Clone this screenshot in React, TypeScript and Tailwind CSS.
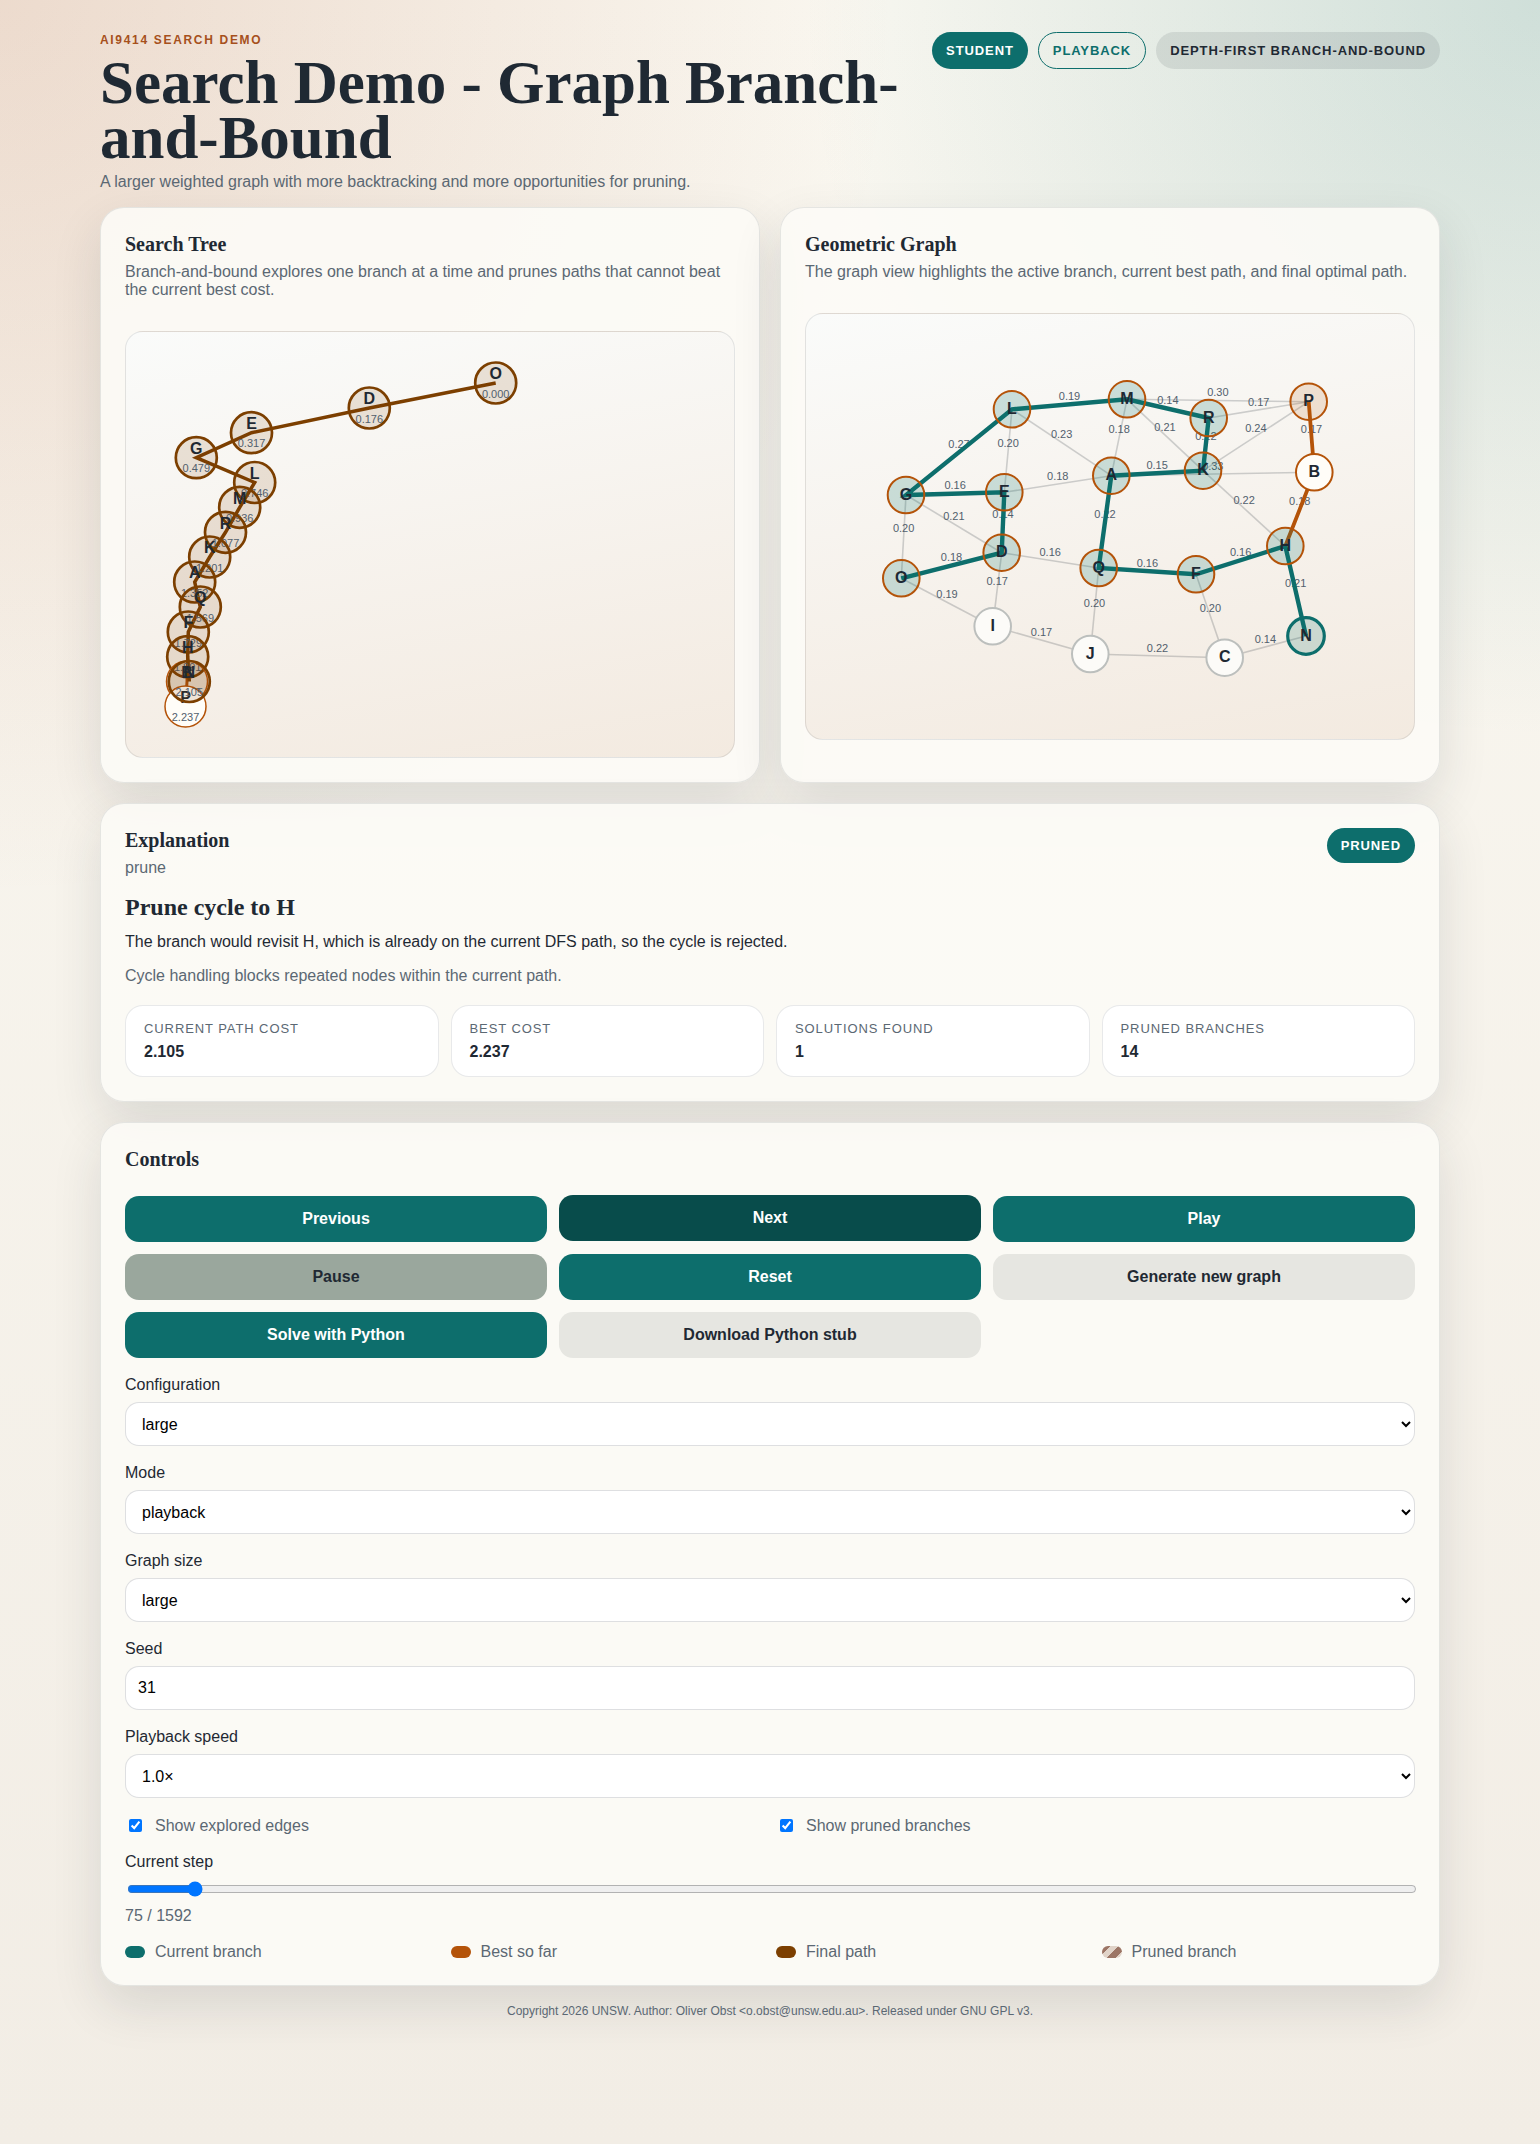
import React, { useState } from 'react';

type Point = [number, number];

interface TreeNode {
    label: string;
    cost: string;
    at: Point;
    best?: boolean;
    leaf?: boolean;
}

const TREE_NODES: TreeNode[] = [
    { label: 'O', cost: '0.000', at: [369.7, 51] },
    { label: 'D', cost: '0.176', at: [243.3, 76] },
    { label: 'E', cost: '0.317', at: [125.5, 100.7] },
    { label: 'G', cost: '0.479', at: [70.3, 125.7] },
    { label: 'L', cost: '0.746', at: [128.7, 150.5] },
    { label: 'M', cost: '0.936', at: [113.7, 175.3] },
    { label: 'R', cost: '1.077', at: [99.5, 200.3] },
    { label: 'K', cost: '1.201', at: [83.7, 225] },
    { label: 'A', cost: '1.352', at: [68.7, 250] },
    { label: 'Q', cost: '1.569', at: [74.3, 275] },
    { label: 'F', cost: '1.729', at: [62.3, 300] },
    { label: 'H', cost: '1.891', at: [61.7, 324.7] },
    { label: 'B', cost: '2.070', at: [61, 349.5], best: true },
    { label: 'P', cost: '2.237', at: [59.5, 374.5], best: true, leaf: true },
    { label: 'N', cost: '2.105', at: [63.3, 349.5] },
];

const TREE_PATH = ['O', 'D', 'E', 'G', 'L', 'M', 'R', 'K', 'A', 'Q', 'F', 'H', 'N'];

const GRAPH_NODES: Record<string, Point> = {
    L: [206, 95.3],
    G: [100, 181],
    E: [198.3, 178.3],
    D: [195.7, 238.7],
    O: [95.3, 264.3],
    I: [186.7, 312.3],
    J: [284.3, 340],
    Q: [292.7, 254],
    A: [305.3, 161.7],
    M: [321, 85.3],
    R: [402.7, 104],
    K: [397, 156.7],
    P: [502.7, 87.7],
    B: [508.3, 158.3],
    H: [479.3, 232],
    F: [390, 260.3],
    C: [418.7, 343.7],
    N: [500, 322],
};

const GRAPH_EDGES: [string, string, string][] = [
    ['L', 'E', '0.20'], ['L', 'A', '0.23'], ['E', 'A', '0.18'], ['G', 'D', '0.21'],
    ['G', 'O', '0.20'], ['O', 'I', '0.19'], ['D', 'I', '0.17'], ['D', 'Q', '0.16'],
    ['I', 'J', '0.17'], ['Q', 'J', '0.20'], ['J', 'C', '0.22'], ['F', 'C', '0.20'],
    ['C', 'N', '0.14'], ['M', 'A', '0.18'], ['M', 'K', '0.21'], ['M', 'P', '0.30'],
    ['R', 'P', '0.17'], ['K', 'P', '0.24'], ['K', 'H', '0.22'], ['A', 'B', '0.33'],
    ['O', 'D', '0.18'], ['D', 'E', '0.14'], ['E', 'G', '0.16'], ['G', 'L', '0.27'],
    ['L', 'M', '0.19'], ['M', 'R', '0.14'], ['R', 'K', '0.12'], ['K', 'A', '0.15'],
    ['A', 'Q', '0.22'], ['Q', 'F', '0.16'], ['F', 'H', '0.16'], ['H', 'N', '0.21'],
    ['H', 'B', '0.18'], ['B', 'P', '0.17'],
];

const CURRENT_PATH = ['O', 'D', 'E', 'G', 'L', 'M', 'R', 'K', 'A', 'Q', 'F', 'H', 'N'];
const BEST_PATH = ['H', 'B', 'P'];

const toPoints = (points: Point[]) => points.map((p) => p.join(',')).join(' ');

const SearchTree: React.FC = () => {
    const find = (label: string) => TREE_NODES.find((n) => n.label === label)!.at;
    return (
        <svg viewBox="0 0 608 425" className="block w-full h-auto" role="img" aria-label="Search tree">
            <polyline points={toPoints(BEST_PATH.map(find))} fill="none" stroke="#b45309" strokeWidth="3" />
            <polyline points={toPoints(TREE_PATH.map(find))} fill="none" stroke="#7c3f00" strokeWidth="3.5" />
            {TREE_NODES.map(({ label, cost, at: [x, y], best, leaf }) => (
                <g key={label} textAnchor="middle">
                    <circle
                        cx={x}
                        cy={y}
                        r="20.5"
                        fill={leaf ? '#fffdf8' : '#7c3f00'}
                        fillOpacity={leaf ? 1 : 0.13}
                        stroke={best ? '#b45309' : '#7c3f00'}
                        strokeWidth={best ? 1.5 : 2.7}
                    />
                    <text x={x} y={y - 3.8} fontSize="16" fontWeight="700" fill="#1f2933">{label}</text>
                    <text x={x} y={y + 14.5} fontSize="11" fill="#52606d">{cost}</text>
                </g>
            ))}
        </svg>
    );
};

const nodeStyle = (label: string) => {
    if (label === 'N') return { fill: '#0f766e', fillOpacity: 0.18, stroke: '#0d6e6c', strokeWidth: 3.2 };
    if (label === 'P') return { fill: '#b45309', fillOpacity: 0.14, stroke: '#b45309', strokeWidth: 2 };
    if (label === 'B') return { fill: '#fffdf8', fillOpacity: 1, stroke: '#b45309', strokeWidth: 2 };
    if (CURRENT_PATH.includes(label)) return { fill: '#0f766e', fillOpacity: 0.2, stroke: '#b45309', strokeWidth: 2 };
    return { fill: '#fcfbf8', fillOpacity: 1, stroke: '#bcbfbd', strokeWidth: 2 };
};

const GeometricGraph: React.FC = () => (
    <svg viewBox="0 0 608 425" className="block w-full h-auto" role="img" aria-label="Weighted graph">
        {GRAPH_EDGES.map(([from, to, weight]) => {
            const [x1, y1] = GRAPH_NODES[from];
            const [x2, y2] = GRAPH_NODES[to];
            return (
                <g key={from + to}>
                    <line x1={x1} y1={y1} x2={x2} y2={y2} stroke="#1f2933" strokeOpacity="0.2" strokeWidth="1.6" />
                    <text x={(x1 + x2) / 2} y={(y1 + y2) / 2 - 4.3} textAnchor="middle" fontSize="11" fill="#52606d">{weight}</text>
                </g>
            );
        })}
        <polyline points={toPoints(BEST_PATH.map((n) => GRAPH_NODES[n]))} fill="none" stroke="#b45309" strokeWidth="3.8" />
        <polyline points={toPoints(CURRENT_PATH.map((n) => GRAPH_NODES[n]))} fill="none" stroke="#0d6e6c" strokeWidth="4.4" />
        {Object.entries(GRAPH_NODES).map(([label, [x, y]]) => (
            <g key={label}>
                <circle cx={x} cy={y} r="18.3" {...nodeStyle(label)} />
                <text x={x} y={y + 4.6} textAnchor="middle" fontSize="16" fontWeight="700" fill="#1f2933">{label}</text>
            </g>
        ))}
    </svg>
);

const Card: React.FC<{ children: React.ReactNode }> = ({ children }) => (
    <section className="min-w-0 rounded-3xl border border-[#1f2933]/10 bg-[#fcfbf6]/90 p-6 shadow-[0_20px_50px_rgba(31,41,51,0.12)]">
        {children}
    </section>
);

const CardTitle: React.FC<{ children: React.ReactNode }> = ({ children }) => (
    <h2 className="font-['Liberation_Serif',serif] text-xl font-bold leading-6">{children}</h2>
);

const Canvas: React.FC<{ children: React.ReactNode }> = ({ children }) => (
    <div className="mt-8 overflow-hidden rounded-[18px] border border-[#1f2933]/10 bg-[linear-gradient(170deg,#fafbfa,#f3eae0)]">
        {children}
    </div>
);

const PILL_TONES = {
    solid: 'bg-[#0d6e6c] text-white',
    outline: 'border border-[#0d6e6c] text-[#0d6e6c]',
    muted: 'bg-[#1f2933]/10',
};

const Pill: React.FC<{ tone: keyof typeof PILL_TONES; children: React.ReactNode }> = ({ tone, children }) => (
    <span className={`inline-flex items-center whitespace-nowrap rounded-full px-[14px] py-[10px] text-[13px] font-bold uppercase leading-[15px] tracking-[0.07em] ${PILL_TONES[tone]}`}>
        {children}
    </span>
);

const BUTTON_TONES = {
    primary: 'bg-[#0d6e6c] text-white hover:bg-[#084c4b]',
    active: 'bg-[#084c4b] text-white -translate-y-px',
    muted: 'bg-[#e6e6e1]',
    paused: 'bg-[#9aa79d]',
};

const BUTTONS: { label: string; tone: keyof typeof BUTTON_TONES }[] = [
    { label: 'Previous', tone: 'primary' },
    { label: 'Next', tone: 'active' },
    { label: 'Play', tone: 'primary' },
    { label: 'Pause', tone: 'paused' },
    { label: 'Reset', tone: 'primary' },
    { label: 'Generate new graph', tone: 'muted' },
    { label: 'Solve with Python', tone: 'primary' },
    { label: 'Download Python stub', tone: 'muted' },
];

const STATS = [
    { label: 'Current path cost', value: '2.105' },
    { label: 'Best cost', value: '2.237' },
    { label: 'Solutions found', value: '1' },
    { label: 'Pruned branches', value: '14' },
];

const LEGEND = [
    { label: 'Current branch', swatch: 'bg-[#0d6e6c]' },
    { label: 'Best so far', swatch: 'bg-[#b45309]' },
    { label: 'Final path', swatch: 'bg-[#7c3f00]' },
    { label: 'Pruned branch', swatch: 'bg-[repeating-linear-gradient(135deg,#9c7565_0_6px,#e0d3c8_6px_12px)]' },
];

const FIELD = 'h-11 w-full rounded-[14px] border border-[#1f2933]/15 bg-white px-3 text-black';

const SelectField: React.FC<{ id: string; label: string; options: string[] }> = ({ id, label, options }) => (
    <div className="flex flex-col gap-2">
        <label htmlFor={id}>{label}</label>
        <select id={id} className={FIELD}>
            {options.map((option) => <option key={option}>{option}</option>)}
        </select>
    </div>
);

const App: React.FC = () => {
    const [step, setStep] = useState(75);
    const [seed, setSeed] = useState('31');
    const [showExplored, setShowExplored] = useState(true);
    const [showPruned, setShowPruned] = useState(true);

    return (
        <div className="min-h-screen bg-[radial-gradient(circle_at_top_left,rgba(170,75,30,0.17),transparent_34%),radial-gradient(circle_at_top_right,rgba(13,110,108,0.18),transparent_28%),linear-gradient(180deg,#faf8f1,#f2ede5)] px-6 pt-8 pb-12 font-['Liberation_Sans',Arial,sans-serif] text-base leading-[18px] text-[#1f2933]">
            <div className="mx-auto max-w-[1340px]">
                <header className="mb-4 flex items-start justify-between gap-5">
                    <div>
                        <p className="text-xs font-bold uppercase leading-4 tracking-[0.14em] text-[#a6501c]">AI9414 Search Demo</p>
                        <h1 className="mt-[7px] font-['Liberation_Serif',serif] text-[61px] font-bold leading-[55px]">Search Demo - Graph Branch-and-Bound</h1>
                        <p className="mt-2 text-[#5b6873]">A larger weighted graph with more backtracking and more opportunities for pruning.</p>
                    </div>
                    <div className="flex shrink-0 gap-[10px]">
                        <Pill tone="solid">Student</Pill>
                        <Pill tone="outline">Playback</Pill>
                        <Pill tone="muted">Depth-first branch-and-bound</Pill>
                    </div>
                </header>

                <main className="flex flex-col gap-5">
                    <div className="grid grid-cols-2 gap-5">
                        <Card>
                            <CardTitle>Search Tree</CardTitle>
                            <p className="mt-[7px] text-[#5b6873]">Branch-and-bound explores one branch at a time and prunes paths that cannot beat the current best cost.</p>
                            <Canvas><SearchTree /></Canvas>
                        </Card>
                        <Card>
                            <CardTitle>Geometric Graph</CardTitle>
                            <p className="mt-[7px] text-[#5b6873]">The graph view highlights the active branch, current best path, and final optimal path.</p>
                            <Canvas><GeometricGraph /></Canvas>
                        </Card>
                    </div>

                    <Card>
                        <div className="flex items-start justify-between">
                            <div>
                                <CardTitle>Explanation</CardTitle>
                                <p className="mt-[7px] text-[#5b6873]">prune</p>
                            </div>
                            <Pill tone="solid">Pruned</Pill>
                        </div>
                        <h3 className="mt-4 font-['Liberation_Serif',serif] text-2xl font-bold leading-7">Prune cycle to H</h3>
                        <p className="mt-3">The branch would revisit H, which is already on the current DFS path, so the cycle is rejected.</p>
                        <p className="mt-4 text-[#5b6873]">Cycle handling blocks repeated nodes within the current path.</p>
                        <dl className="mt-5 grid grid-cols-4 gap-3">
                            {STATS.map((stat) => (
                                <div key={stat.label} className="rounded-[18px] border border-[#1f2933]/10 bg-white px-[18px] py-[15px]">
                                    <dt className="text-[13px] uppercase leading-4 tracking-[0.07em] text-[#5b6873]">{stat.label}</dt>
                                    <dd className="mt-[6px] font-bold">{stat.value}</dd>
                                </div>
                            ))}
                        </dl>
                    </Card>

                    <Card>
                        <CardTitle>Controls</CardTitle>
                        <div className="mt-[25px] flex flex-col gap-[18px]">
                            <div className="grid grid-cols-3 gap-3">
                                {BUTTONS.map(({ label, tone }) => (
                                    <button key={label} type="button" className={`h-[46px] rounded-[14px] font-bold ${BUTTON_TONES[tone]}`}>
                                        {label}
                                    </button>
                                ))}
                            </div>
                            <SelectField id="configuration" label="Configuration" options={['large', 'medium', 'small']} />
                            <SelectField id="mode" label="Mode" options={['playback', 'interactive']} />
                            <SelectField id="graph-size" label="Graph size" options={['large', 'medium', 'small']} />
                            <div className="flex flex-col gap-2">
                                <label htmlFor="seed">Seed</label>
                                <input id="seed" type="text" value={seed} onChange={(e) => setSeed(e.target.value)} className={FIELD} />
                            </div>
                            <SelectField id="speed" label="Playback speed" options={['1.0×', '0.5×', '2.0×']} />
                            <div className="grid grid-cols-2 gap-3 leading-[19px] text-[#5b6873]">
                                <label className="flex items-center gap-[10px]">
                                    <input type="checkbox" className="ml-1 mr-[3px]" checked={showExplored} onChange={(e) => setShowExplored(e.target.checked)} />
                                    Show explored edges
                                </label>
                                <label className="flex items-center gap-[10px]">
                                    <input type="checkbox" className="ml-1 mr-[3px]" checked={showPruned} onChange={(e) => setShowPruned(e.target.checked)} />
                                    Show pruned branches
                                </label>
                            </div>
                            <div className="flex flex-col gap-2">
                                <label htmlFor="step">Current step</label>
                                <input id="step" type="range" min={0} max={1592} value={step} onChange={(e) => setStep(Number(e.target.value))} className="my-[2px] ml-[2px] h-4 w-full" />
                                <p className="text-[#5b6873]">{step} / 1592</p>
                            </div>
                            <ul className="grid grid-cols-4 gap-3 text-[#5b6873]">
                                {LEGEND.map((item) => (
                                    <li key={item.label} className="flex items-center gap-[10px]">
                                        <span className={`h-3 w-5 rounded-full ${item.swatch}`} />
                                        {item.label}
                                    </li>
                                ))}
                            </ul>
                        </div>
                    </Card>
                </main>

                <footer className="mt-[18px] text-center text-xs leading-[14px] text-[#5b6873]">
                    Copyright 2026 UNSW. Author: Oliver Obst &lt;o.obst@unsw.edu.au&gt;. Released under GNU GPL v3.
                </footer>
            </div>
        </div>
    );
};

export default App;
